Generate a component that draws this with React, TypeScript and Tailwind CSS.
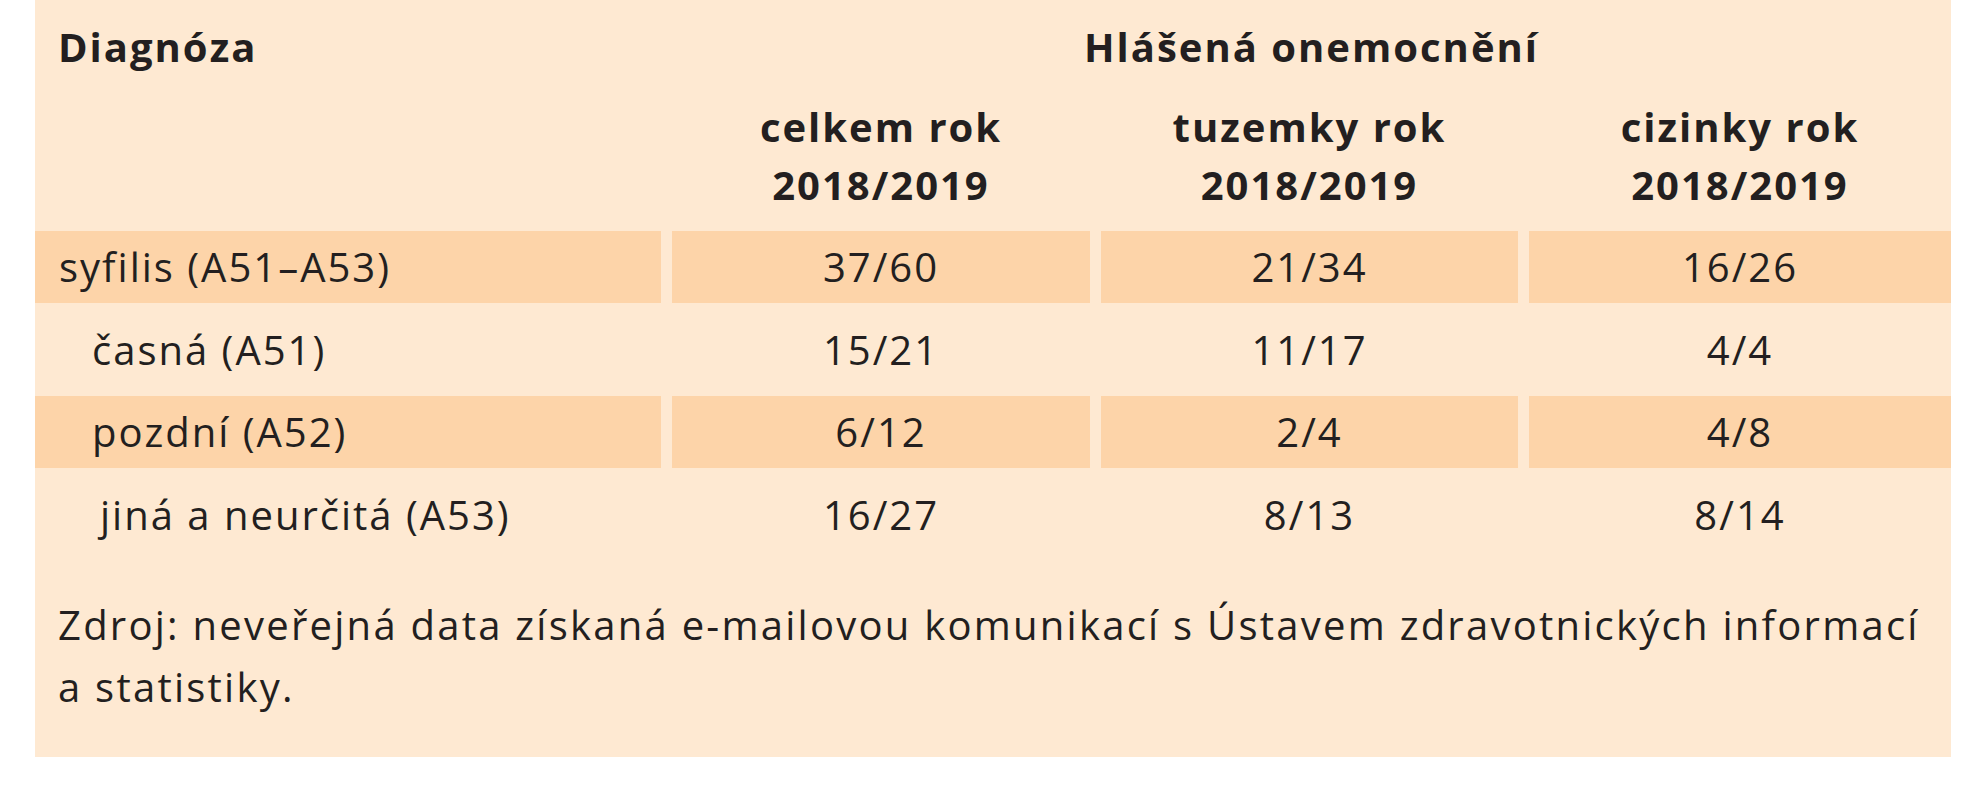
import React from "react";

const rows = [
  { label: "syfilis (A51–A53)", pad: "pl-[24px]", vals: ["37/60", "21/34", "16/26"], band: true },
  { label: "časná (A51)", pad: "pl-[57px]", vals: ["15/21", "11/17", "4/4"], band: false },
  { label: "pozdní (A52)", pad: "pl-[57px]", vals: ["6/12", "2/4", "4/8"], band: true },
  { label: "jiná a neurčitá (A53)", pad: "pl-[65px]", vals: ["16/27", "8/13", "8/14"], band: false },
];

export default function App() {
  return (
    <div className="w-[1988px] h-[800px] bg-white">
      <div className="ml-[35px] w-[1916px] h-[757px] bg-[#fee9d2] text-[#231f20] font-['Open_Sans',sans-serif] text-[40px] tracking-[2px]">
        <div className="grid grid-cols-[626px_418px_417px_422px] gap-x-[11px] pt-[17px] leading-[60px] font-bold">
          <div className="pl-[23px]">Diagnóza</div>
          <div className="col-span-3 text-center">Hlášená onemocnění</div>
        </div>
        <div className="grid grid-cols-[626px_418px_417px_422px] gap-x-[11px] mt-[20.5px] leading-[58px] font-bold text-center">
          <div />
          <div>celkem rok<br />2018/2019</div>
          <div>tuzemky rok<br />2018/2019</div>
          <div>cizinky rok<br />2018/2019</div>
        </div>
        <div className="flex flex-col gap-y-[10.5px] mt-[17.5px]">
          {rows.map((r) => (
            <div key={r.label} className="grid grid-cols-[626px_418px_417px_422px] gap-x-[11px] h-[72px] leading-[72px]">
              <div className={`${r.pad} ${r.band ? "bg-[#fdd4a9]" : ""}`}>{r.label}</div>
              {r.vals.map((v, i) => (
                <div key={i} className={`text-center ${r.band ? "bg-[#fdd4a9]" : ""}`}>{v}</div>
              ))}
            </div>
          ))}
        </div>
        <div className="mt-[43px] pl-[23px] pr-[20px] leading-[62px] tracking-[2.25px]">
          Zdroj: neveřejná data získaná e-mailovou komunikací s Ústavem zdravotnických informací a statistiky.
        </div>
      </div>
    </div>
  );
}
